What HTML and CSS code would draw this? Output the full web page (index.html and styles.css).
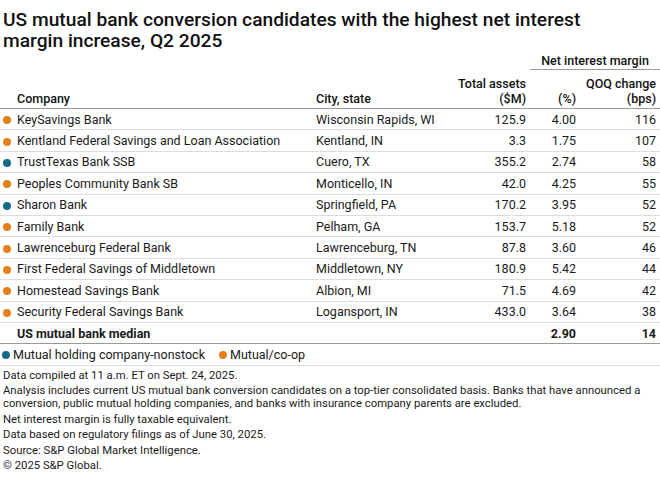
FILE: index.html
```html
<!DOCTYPE html>
<html>
<head>
<meta charset="utf-8">
<link rel="stylesheet" href="styles.css">
</head>
<body>
<div class="page">
  <h1 class="title">US mutual bank conversion candidates with the highest net interest margin increase, Q2 2025</h1>
  <table class="tbl">
    <colgroup>
      <col class="c-company"><col class="c-city"><col class="c-assets"><col class="c-pct"><col class="c-qoq">
    </colgroup>
    <thead>
      <tr class="grp">
        <th></th><th></th><th></th>
        <th colspan="2" class="grp-label">Net interest margin</th>
      </tr>
      <tr class="hdr">
        <th class="l company-h">Company</th>
        <th class="l">City, state</th>
        <th class="r">Total assets<br>($M)</th>
        <th class="r">(%)</th>
        <th class="r">QOQ change<br>(bps)</th>
      </tr>
    </thead>
    <tbody>
      <tr><td class="co"><span class="dot o"></span>KeySavings Bank</td><td>Wisconsin Rapids, WI</td><td class="r">125.9</td><td class="r">4.00</td><td class="r">116</td></tr>
      <tr><td class="co"><span class="dot o"></span>Kentland Federal Savings and Loan Association</td><td>Kentland, IN</td><td class="r">3.3</td><td class="r">1.75</td><td class="r">107</td></tr>
      <tr><td class="co"><span class="dot t"></span>TrustTexas Bank SSB</td><td>Cuero, TX</td><td class="r">355.2</td><td class="r">2.74</td><td class="r">58</td></tr>
      <tr><td class="co"><span class="dot o"></span>Peoples Community Bank SB</td><td>Monticello, IN</td><td class="r">42.0</td><td class="r">4.25</td><td class="r">55</td></tr>
      <tr><td class="co"><span class="dot t"></span>Sharon Bank</td><td>Springfield, PA</td><td class="r">170.2</td><td class="r">3.95</td><td class="r">52</td></tr>
      <tr><td class="co"><span class="dot o"></span>Family Bank</td><td>Pelham, GA</td><td class="r">153.7</td><td class="r">5.18</td><td class="r">52</td></tr>
      <tr><td class="co"><span class="dot o"></span>Lawrenceburg Federal Bank</td><td>Lawrenceburg, TN</td><td class="r">87.8</td><td class="r">3.60</td><td class="r">46</td></tr>
      <tr><td class="co"><span class="dot o"></span>First Federal Savings of Middletown</td><td>Middletown, NY</td><td class="r">180.9</td><td class="r">5.42</td><td class="r">44</td></tr>
      <tr><td class="co"><span class="dot o"></span>Homestead Savings Bank</td><td>Albion, MI</td><td class="r">71.5</td><td class="r">4.69</td><td class="r">42</td></tr>
      <tr><td class="co"><span class="dot o"></span>Security Federal Savings Bank</td><td>Logansport, IN</td><td class="r">433.0</td><td class="r">3.64</td><td class="r">38</td></tr>
      <tr class="median"><td class="co b">US mutual bank median</td><td></td><td></td><td class="r b">2.90</td><td class="r b">14</td></tr>
      <tr class="legend"><td colspan="5"><span class="leg"><span class="dot t"></span>Mutual holding company-nonstock</span><span class="leg"><span class="dot o"></span>Mutual/co-op</span></td></tr>
    </tbody>
  </table>
  <div class="notes">
    <p>Data compiled at 11 a.m. ET on Sept. 24, 2025.</p>
    <p>Analysis includes current US mutual bank conversion candidates on a top-tier consolidated basis. Banks that have announced a conversion, public mutual holding companies, and banks with insurance company parents are excluded.</p>
    <p>Net interest margin is fully taxable equivalent.</p>
    <p>Data based on regulatory filings as of June 30, 2025.</p>
    <p>Source: S&amp;P Global Market Intelligence.</p>
    <p>© 2025 S&amp;P Global.</p>
  </div>
</div>
</body>
</html>
```
FILE: styles.css
```css
html, body { margin: 0; padding: 0; background: #fff; }
body { font-family: Roboto, "Liberation Sans", sans-serif; color: #1a1a1a; }
.page { width: 660px; }
.title {
  margin: 0;
  width: 600px;
  padding: 9px 3px 0 3px;
  font-size: 19.2px;
  line-height: 21px;
  font-weight: 500;
  color: #111;
}
.tbl {
  width: 660px;
  border-collapse: collapse;
  table-layout: fixed;
  font-size: 12.5px;
  margin-top: 0;
}
.c-company { width: 312px; }
.c-city { width: 139px; }
.c-assets { width: 79px; }
.c-pct { width: 50px; }
.c-qoq { width: 80px; }
th { font-weight: 500; color: #111; padding: 0 4px; }
.grp th { height: 18px; vertical-align: middle; }
.grp-label { text-align: center; border-bottom: 1px solid #9a9a9a; }
.hdr th { height: 36px; line-height: 15px; vertical-align: bottom; padding-bottom: 2px; border-bottom: 1px solid #9a9a9a; }
.l { text-align: left; }
.r { text-align: right; }
.company-h { padding-left: 17px; }
td { height: 20.4px; padding: 0 4px; border-bottom: 1px solid #dcdcdc; white-space: nowrap; }
td.co { padding-left: 3px; }
.dot { display: inline-block; width: 8px; height: 8px; border-radius: 50%; margin-right: 6px; vertical-align: -0.5px; }
.o { background: #e5801c; }
.t { background: #136b87; }
.b { font-weight: 700; }
.median td { border-bottom: 1px solid #9a9a9a; }
.median td.co { padding-left: 17px; }
.legend td { padding-left: 2px; }
.leg { margin-right: 14px; }
.leg .dot { margin-right: 3px; }
.notes { padding: 3px 3px 0 3px; font-size: 11.3px; line-height: 13px; color: #1a1a1a; }
.notes p { margin: 0 0 2.5px 0; }
```
